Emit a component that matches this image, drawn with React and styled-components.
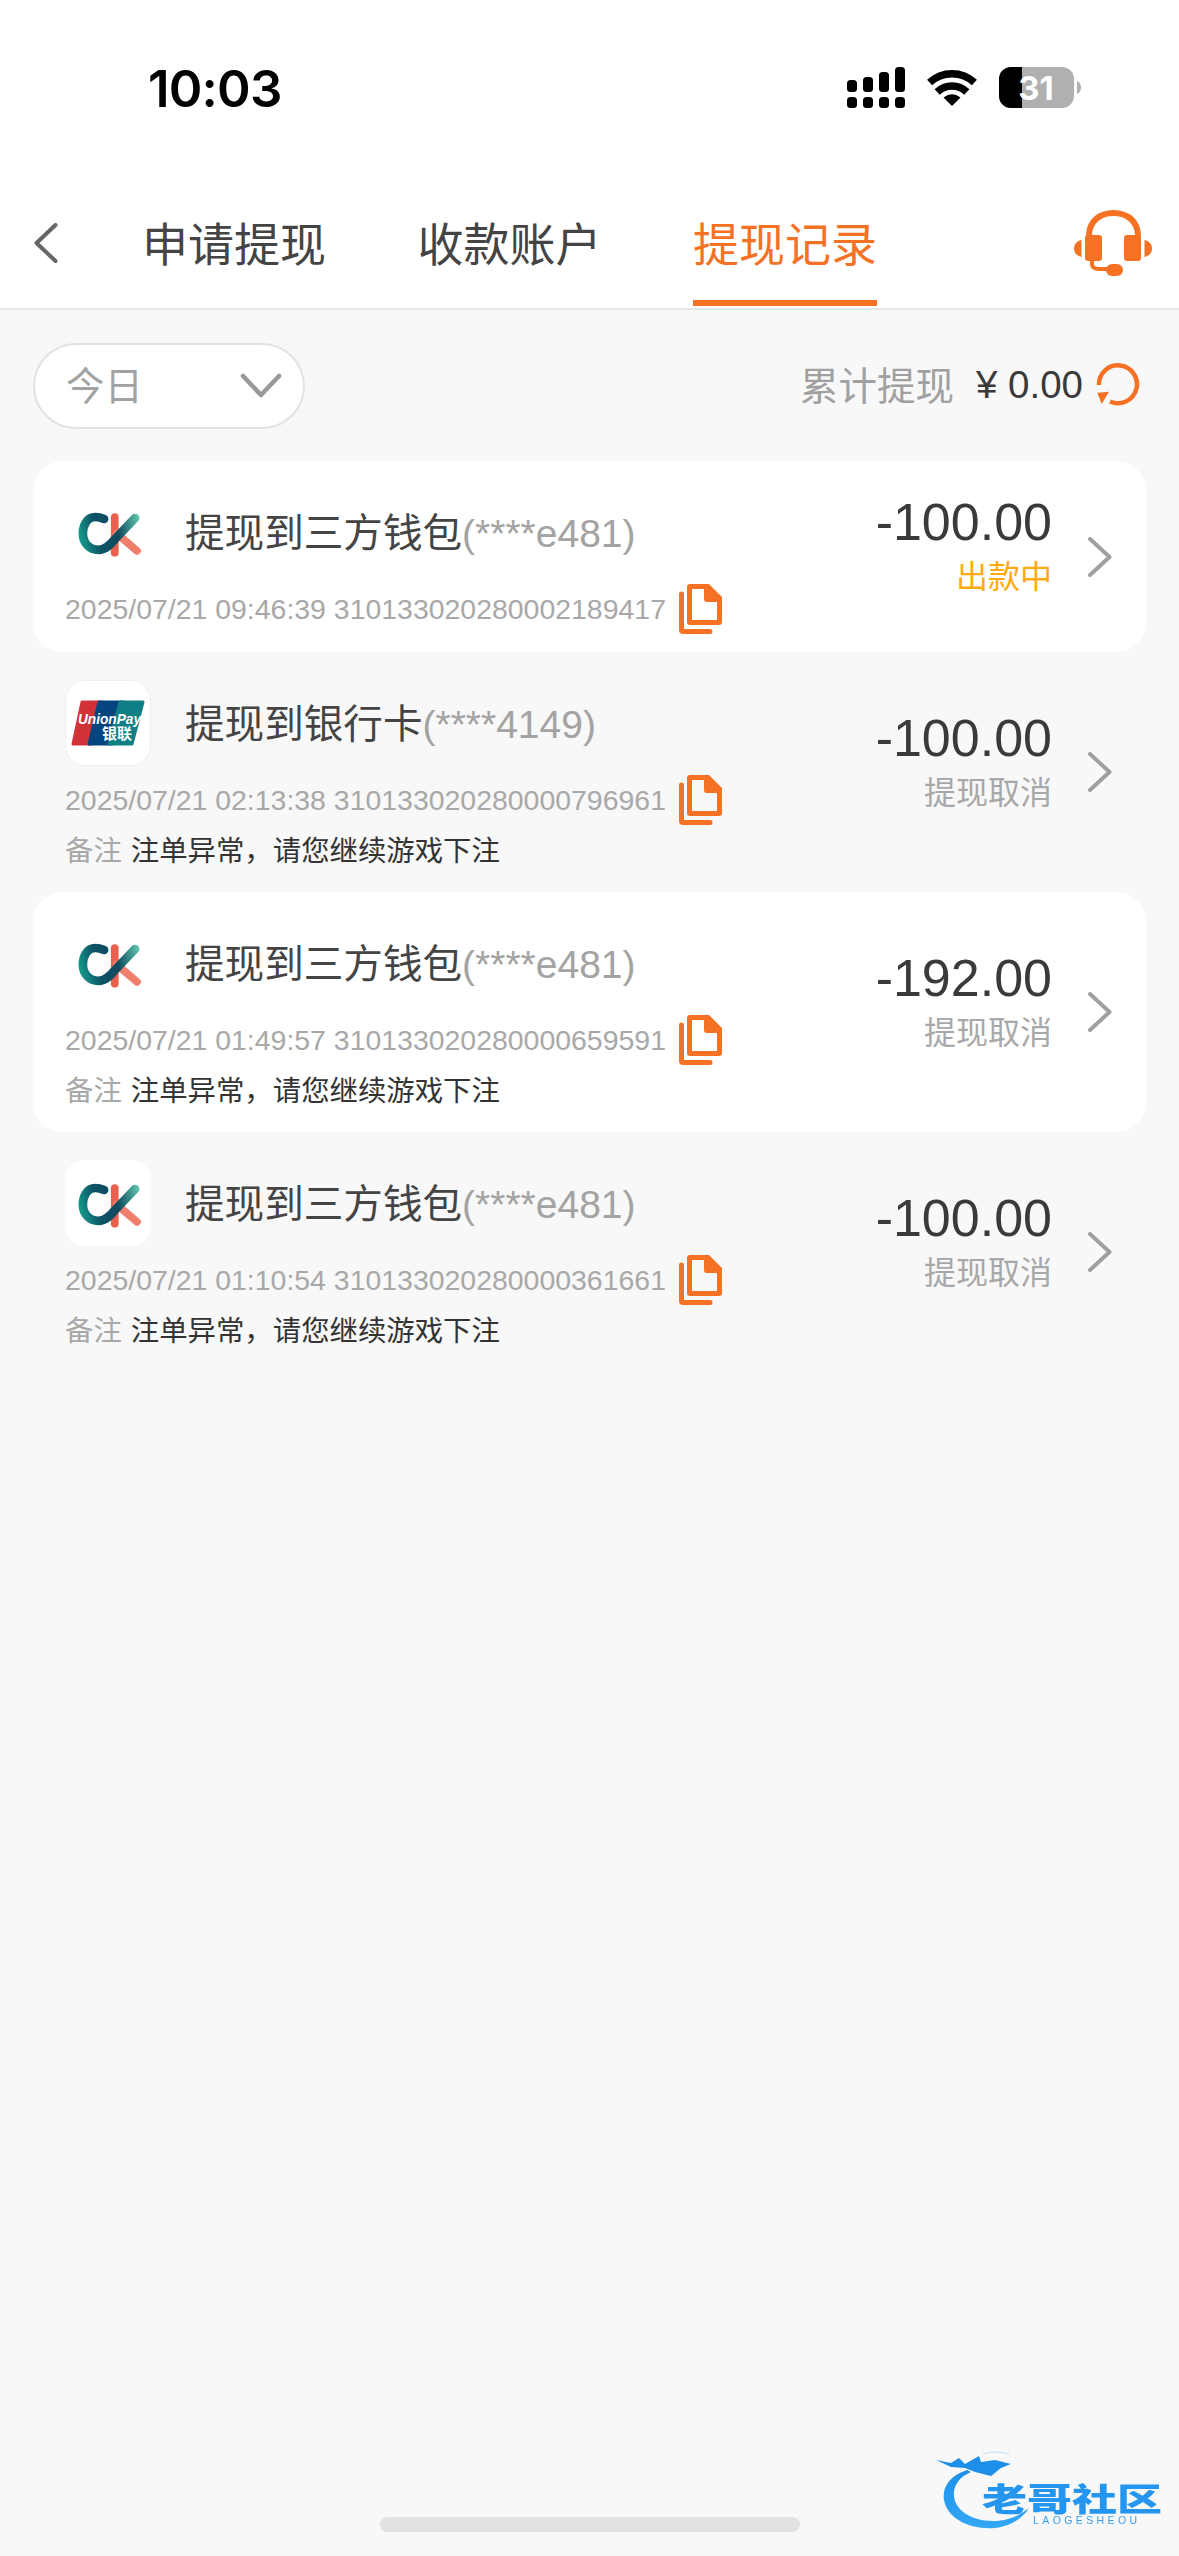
import React from "react";
import styled, { createGlobalStyle } from "styled-components";

const Global = createGlobalStyle`
  html, body { margin: 0; padding: 0; background: #f8f8f8; }
  body { font-family: "Liberation Sans", "Noto Sans CJK SC", sans-serif; }
`;

const CJK = `"Noto Sans CJK SC", "Liberation Sans", sans-serif`;
const LATIN = `"Liberation Sans", "Noto Sans CJK SC", sans-serif`;
const ORANGE = "#f57224";

const Page = styled.div`
  width: 1179px;
  height: 2556px;
  position: relative;
  overflow: hidden;
  background: #f8f8f8;
`;
const Header = styled.header`
  background: #fff;
  border-bottom: 2px solid #e4e4e4;
  height: 308px;
  display: flex;
  flex-direction: column;
`;
const StatusBar = styled.div`
  height: 201px;
  padding: 67px 98px 0 148px;
  box-sizing: border-box;
  display: flex;
  justify-content: space-between;
  align-items: flex-start;
`;
const Time = styled.div`
  font-family: Inter, "Liberation Sans", sans-serif;
  font-weight: 600;
  font-size: 51px;
  line-height: 44px;
  letter-spacing: -0.8px;
  color: #000;
`;
const StatusIcons = styled.div`
  display: flex;
  align-items: flex-start;
  gap: 22px;
`;
const NavBar = styled.nav`
  flex: 1;
  display: flex;
  align-items: flex-start;
  padding: 0 27px 0 34px;
`;
const BackIcon = styled.svg`
  width: 24px;
  height: 40px;
  margin-top: 22px;
  margin-right: 84px;
  flex: none;
`;
const Tabs = styled.div`
  flex: 1;
  display: flex;
  gap: 91.5px;
  height: 100%;
`;
const Tab = styled.div`
  position: relative;
  height: 100%;
  font-family: ${CJK};
  font-size: 46px;
  line-height: 80px;
  white-space: nowrap;
  color: ${p => (p.$active ? ORANGE : "#444")};
  &::after {
    content: "";
    display: ${p => (p.$active ? "block" : "none")};
    position: absolute;
    left: 0;
    right: 0;
    bottom: 2px;
    height: 6px;
    background: ${ORANGE};
  }
`;
const HeadsetIcon = styled.svg`
  width: 78px;
  height: 66px;
  margin-top: 9px;
  flex: none;
`;
const Toolbar = styled.div`
  display: flex;
  align-items: center;
  justify-content: space-between;
  padding: 33px 39px 32px 33px;
  height: 86px;
`;
const Pill = styled.div`
  width: 272px;
  height: 86px;
  box-sizing: border-box;
  border: 2px solid #e2e2e2;
  border-radius: 43px;
  background: #fff;
  display: flex;
  align-items: center;
  justify-content: space-between;
  padding: 0 21px 0 31px;
  font-family: ${CJK};
  font-size: 38.5px;
  color: #a2a2a2;
`;
const PillText = styled.span`
  padding-bottom: 6px;
`;
const PillChevron = styled.svg`
  width: 42px;
  height: 26px;
`;
const Summary = styled.div`
  display: flex;
  align-items: center;
`;
const SummaryLabel = styled.span`
  font-family: ${CJK};
  font-size: 38.5px;
  color: #a0a0a0;
  margin-right: 22px;
  padding-bottom: 6px;
`;
const SummaryValue = styled.span`
  font-family: ${LATIN};
  font-size: 38.5px;
  color: #3a3a3a;
  margin-right: 13px;
  padding-bottom: 3px;
  white-space: pre;
`;
const RefreshIcon = styled.svg`
  width: 44px;
  height: 44px;
  margin-bottom: 2px;
`;
const List = styled.div`
  margin: 0 33px;
`;
const Row = styled.article`
  display: grid;
  grid-template-columns: 1fr auto auto;
  align-items: center;
  padding: 0 34px 0 32px;
  border-radius: 30px;
  background: ${p => (p.$white ? "#fff" : "transparent")};
`;
const Main = styled.div`
  padding: 28px 0 23px;
`;
const TitleLine = styled.div`
  display: flex;
  align-items: center;
  gap: 34px;
`;
const LogoBox = styled.div`
  width: 86px;
  height: 86px;
  flex: none;
  background: #fff;
  border-radius: 20px;
  border: ${p => (p.$outlined ? "1px solid #eee" : "none")};
  box-sizing: border-box;
  overflow: hidden;
`;
const LogoSvg = styled.svg`
  display: block;
  width: 100%;
  height: 100%;
`;
const Title = styled.div`
  font-family: ${CJK};
  font-size: 39.6px;
  color: #444;
  white-space: nowrap;
  padding-bottom: 6px;
`;
const Masked = styled.span`
  font-family: ${LATIN};
  font-size: 39px;
  color: #a3a3a3;
`;
const MetaLine = styled.div`
  display: flex;
  align-items: center;
  margin-top: 14px;
  height: 40px;
`;
const Meta = styled.span`
  font-family: ${LATIN};
  font-size: 28.45px;
  color: #a8a8a8;
  white-space: pre;
`;
const CopyIcon = styled.svg`
  width: 43px;
  height: 50px;
  margin-left: 13px;
  flex: none;
`;
const NoteLine = styled.div`
  display: flex;
  align-items: center;
  gap: 9px;
  margin-top: 9px;
  height: 40px;
  box-sizing: border-box;
  padding-bottom: 2px;
  font-family: ${CJK};
  font-size: 28.4px;
`;
const NoteLabel = styled.span`
  color: #a8a8a8;
`;
const NoteText = styled.span`
  color: #333;
`;
const Right = styled.div`
  display: flex;
  flex-direction: column;
  align-items: flex-end;
  padding-bottom: 25px;
  margin-right: 36px;
`;
const Amount = styled.div`
  font-family: ${LATIN};
  font-size: 52px;
  line-height: 60px;
  color: #3a3a3a;
`;
const State = styled.div`
  font-family: ${CJK};
  font-size: 32px;
  line-height: 44px;
  color: ${p => (p.$pending ? "#ffab0f" : "#a8a8a8")};
`;
const RowChevron = styled.svg`
  width: 24px;
  height: 40px;
`;
const HomeBar = styled.div`
  position: absolute;
  left: 380px;
  top: 2517px;
  width: 420px;
  height: 15px;
  border-radius: 8px;
  background: #e2e2e2;
`;
const Watermark = styled.div`
  position: absolute;
  left: 935px;
  top: 2450px;
  width: 240px;
  height: 84px;
  filter: blur(0.7px);
`;
const WatermarkArt = styled.svg`
  position: absolute;
  left: 0;
  top: 0;
  width: 240px;
  height: 84px;
`;
const WatermarkName = styled.div`
  position: absolute;
  left: 47px;
  top: 31px;
  font-family: ${CJK};
  font-weight: 900;
  font-size: 45px;
  line-height: 32px;
  white-space: nowrap;
  color: #2496f0;
  transform: scaleY(0.72);
`;
const WatermarkLatin = styled.div`
  position: absolute;
  left: 98px;
  top: 65px;
  font-family: ${LATIN};
  font-size: 10.5px;
  letter-spacing: 3.4px;
  line-height: 10px;
  white-space: nowrap;
  color: #3aa0ee;
`;

const SignalIcon = () => (
  <svg width="58" height="41" viewBox="0 0 58 41">
    <g fill="#000">
      <rect x="0" y="13" width="10" height="12" rx="3.5" />
      <rect x="16" y="10" width="10" height="15" rx="3.5" />
      <rect x="32" y="5" width="10" height="20" rx="3.5" />
      <rect x="48" y="0" width="10" height="25" rx="3.5" />
      <rect x="0" y="30" width="10" height="11" rx="3.5" />
      <rect x="16" y="30" width="10" height="11" rx="3.5" />
      <rect x="32" y="30" width="10" height="11" rx="3.5" />
      <rect x="48" y="30" width="10" height="11" rx="3.5" />
    </g>
  </svg>
);

const WifiIcon = () => (
  <svg width="50" height="41" viewBox="0 0 50 41">
    <g fill="none" stroke="#000" strokeWidth="7.5">
      <path d="M2.6 15.6 A 33 33 0 0 1 47.4 15.6" />
      <path d="M10.2 25 A 21 21 0 0 1 39.8 25" />
    </g>
    <path d="M25 39 L16.5 30.5 Q25 24 33.5 30.5 Z" fill="#000" />
  </svg>
);

const BatteryIcon = () => (
  <svg width="82" height="41" viewBox="0 0 82 41">
    <defs>
      <clipPath id="bat-clip">
        <rect x="0" y="0" width="75" height="41" rx="12" />
      </clipPath>
    </defs>
    <g clipPath="url(#bat-clip)">
      <rect x="0" y="0" width="75" height="41" fill="#b0b0b0" />
      <rect x="0" y="0" width="23" height="41" fill="#000" />
    </g>
    <path d="M78 14 Q82 16 82 20.5 Q82 25 78 27 Z" fill="#b0b0b0" />
    <text x="37" y="33" textAnchor="middle" fontFamily="Inter, Liberation Sans, sans-serif" fontWeight="700" fontSize="33" fill="#fff">31</text>
  </svg>
);

const Headset = () => (
  <HeadsetIcon viewBox="0 0 78 66">
    <path d="M15 30 V26 C15 11 26 3 39.5 3 C53 3 64 11 64 26 V30" fill="none" stroke={ORANGE} strokeWidth="6" />
    <rect x="11" y="25" width="17" height="26" rx="3" fill={ORANGE} />
    <rect x="50" y="25" width="17" height="26" rx="3" fill={ORANGE} />
    <path d="M7.5 30 V47 C3 46 0 43 0 38.5 C0 34 3 31 7.5 30 Z" fill={ORANGE} />
    <path d="M70.5 30 V47 C75 46 78 43 78 38.5 C78 34 75 31 70.5 30 Z" fill={ORANGE} />
    <path d="M18 51 V54 C18 58 21 59 25 59 H36" fill="none" stroke={ORANGE} strokeWidth="4" />
    <rect x="32" y="54" width="17" height="12" rx="6" fill={ORANGE} />
  </HeadsetIcon>
);

const Chevron = () => (
  <RowChevron viewBox="0 0 24 40">
    <path d="M2 2 L21.5 20 L2 38" fill="none" stroke="#a0a0a0" strokeWidth="4" strokeLinecap="round" strokeLinejoin="round" />
  </RowChevron>
);

const Copy = () => (
  <CopyIcon viewBox="0 0 43 50">
    <path d="M2.5 10 V46 C2.5 47 3 47.5 4 47.5 H31" fill="none" stroke={ORANGE} strokeWidth="5" strokeLinecap="round" />
    <path fillRule="evenodd" fill={ORANGE} d="M11 0 H30 L43 13 V38 Q43 41 40 41 H11 Q8 41 8 38 V3 Q8 0 11 0 Z M13 5 V36 H38 V18 H28 Q25 18 25 15 V5 Z" />
  </CopyIcon>
);

const CkLogo = () => (
  <LogoSvg viewBox="0 0 86 89" preserveAspectRatio="xMidYMid meet">
    <defs>
      <linearGradient id="ck-teal" x1="12" y1="46" x2="74" y2="30" gradientUnits="userSpaceOnUse">
        <stop offset="0" stopColor="#169a8c" />
        <stop offset="0.3" stopColor="#0e5265" />
        <stop offset="0.62" stopColor="#0f4a5f" />
        <stop offset="1" stopColor="#5cc0aa" />
      </linearGradient>
    </defs>
    <path d="M50 29 V66" stroke="#e9604f" strokeWidth="8" strokeLinecap="round" fill="none" />
    <path d="M52 46 L73 64" stroke="#ef7f6c" strokeWidth="8" strokeLinecap="round" fill="none" />
    <path d="M39 31 Q34 29 30 29 C21 29 17 38 17 46 C17 56 24 63 33 63 C41 63 46 57 50 52 L71 30" stroke="url(#ck-teal)" strokeWidth="9" strokeLinecap="round" fill="none" />
  </LogoSvg>
);

const UnionPayLogo = () => (
  <LogoSvg viewBox="0 0 84 84">
    <g strokeLinejoin="round" strokeWidth="3">
      <path d="M16 21 H36 L26 63 H7 Z" fill="#d13237" stroke="#d13237" />
      <path d="M33 21 H57 L46 63 H23 Z" fill="#04457f" stroke="#04457f" />
      <path d="M54 21 H77 L66 63 H43 Z" fill="#0f7f85" stroke="#0f7f85" />
    </g>
    <text x="12" y="43" fontFamily="Liberation Sans, sans-serif" fontStyle="italic" fontWeight="700" fontSize="15" textLength="63" lengthAdjust="spacingAndGlyphs" fill="#fff">UnionPay</text>
    <text x="36" y="58" fontFamily="Noto Sans CJK SC, sans-serif" fontWeight="700" fontSize="15" fill="#fff">银联</text>
  </LogoSvg>
);

const records = [
  { logo: "ck", title: "提现到三方钱包", mask: "(****e481)", meta: "2025/07/21 09:46:39 310133020280002189417", amount: "-100.00", state: "出款中", pending: true, white: true },
  { logo: "up", title: "提现到银行卡", mask: "(****4149)", meta: "2025/07/21 02:13:38 310133020280000796961", amount: "-100.00", state: "提现取消", note: true },
  { logo: "ck", title: "提现到三方钱包", mask: "(****e481)", meta: "2025/07/21 01:49:57 310133020280000659591", amount: "-192.00", state: "提现取消", note: true, white: true },
  { logo: "ck", title: "提现到三方钱包", mask: "(****e481)", meta: "2025/07/21 01:10:54 310133020280000361661", amount: "-100.00", state: "提现取消", note: true },
];

export default function App() {
  return (
    <Page>
      <Global />
      <Header>
        <StatusBar>
          <Time>10:03</Time>
          <StatusIcons>
            <SignalIcon />
            <WifiIcon />
            <BatteryIcon />
          </StatusIcons>
        </StatusBar>
        <NavBar>
          <BackIcon viewBox="0 0 24 40">
            <path d="M21.5 2 L2.5 20 L21.5 38" fill="none" stroke="#666" strokeWidth="4" strokeLinecap="round" strokeLinejoin="round" />
          </BackIcon>
          <Tabs>
            <Tab>申请提现</Tab>
            <Tab>收款账户</Tab>
            <Tab $active>提现记录</Tab>
          </Tabs>
          <Headset />
        </NavBar>
      </Header>
      <Toolbar>
        <Pill>
          <PillText>今日</PillText>
          <PillChevron viewBox="0 0 42 26">
            <path d="M3 3 L21 22 L39 3" fill="none" stroke="#999" strokeWidth="4.5" strokeLinecap="round" strokeLinejoin="round" />
          </PillChevron>
        </Pill>
        <Summary>
          <SummaryLabel>累计提现</SummaryLabel>
          <SummaryValue>¥ 0.00</SummaryValue>
          <RefreshIcon viewBox="0 0 44 44">
            <path d="M3 22 A 19 19 0 1 1 14 38.5" fill="none" stroke={ORANGE} strokeWidth="4.5" />
            <path d="M1.3 29.7 L13 28.7 L5.7 41 Z" fill={ORANGE} />
          </RefreshIcon>
        </Summary>
      </Toolbar>
      <List>
        {records.map(r => (
          <Row key={r.meta} $white={r.white}>
            <Main>
              <TitleLine>
                <LogoBox $outlined={r.logo === "up"}>
                  {r.logo === "ck" ? <CkLogo /> : <UnionPayLogo />}
                </LogoBox>
                <Title>
                  {r.title}
                  <Masked>{r.mask}</Masked>
                </Title>
              </TitleLine>
              <MetaLine>
                <Meta>{r.meta}</Meta>
                <Copy />
              </MetaLine>
              {r.note && (
                <NoteLine>
                  <NoteLabel>备注</NoteLabel>
                  <NoteText>注单异常，请您继续游戏下注</NoteText>
                </NoteLine>
              )}
            </Main>
            <Right>
              <Amount>{r.amount}</Amount>
              <State $pending={r.pending}>{r.state}</State>
            </Right>
            <Chevron />
          </Row>
        ))}
      </List>
      <HomeBar />
      <Watermark>
        <WatermarkArt viewBox="0 0 240 84">
          <defs>
            <linearGradient id="wm-arc" x1="0" y1="0" x2="0" y2="1">
              <stop offset="0" stopColor="#1d8fe8" />
              <stop offset="1" stopColor="#33a8f5" />
            </linearGradient>
          </defs>
          <path d="M32 20 C14 26 7 38 9 50 C12 68 34 80 60 78 C76 76 88 68 94 58 C84 66 72 71 58 71 C36 71 20 60 19 46 C18 36 24 27 36 22 Z" fill="url(#wm-arc)" />
          <path d="M1 10 L16 13 L24 8 L30 14 L44 6 L46 12 L60 10 L76 14 L66 18 L56 26 L40 22 L30 18 L16 17 Z" fill="#1d8fe8" />
          <path d="M48 4 Q60 0 74 4" fill="none" stroke="#bfe0fa" strokeWidth="1.2" />
        </WatermarkArt>
        <WatermarkName>老哥社区</WatermarkName>
        <WatermarkLatin>LAOGESHEOU</WatermarkLatin>
      </Watermark>
    </Page>
  );
}
